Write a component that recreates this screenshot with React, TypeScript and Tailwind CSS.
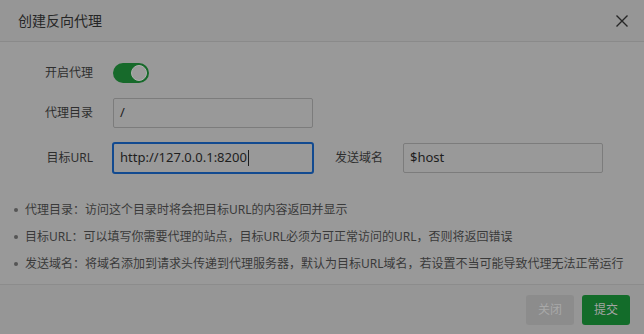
import React from "react";

export default function App() {
  const font = { fontFamily: '"Noto Sans", "Noto Sans CJK SC", sans-serif' };
  return (
    <div
      className="w-[644px] h-[334px] bg-[#999999] flex flex-col overflow-hidden"
      style={font}
    >
      {/* header */}
      <div className="h-[42px] shrink-0 flex items-center justify-between pl-[18px] pr-[14px] border-b border-[#8a8a8a] bg-[#969696]">
        <span className="text-[14px] text-[#262626] leading-none">创建反向代理</span>
        <svg width="14" height="14" viewBox="0 0 14 14" className="mr-[1px]">
          <path d="M1.5 1.5 L12.5 12.5 M12.5 1.5 L1.5 12.5" stroke="#262626" strokeWidth="1.4" />
        </svg>
      </div>

      {/* form */}
      <div className="flex flex-col pl-[23px] pt-[16px]">
        <div className="flex items-center h-[30px]">
          <div className="w-[90px] pr-[20px] text-right text-[12px] text-[#2e2e2e]">开启代理</div>
          <div className="w-[36px] h-[20px] rounded-full bg-[#176a2b] flex items-center justify-end pr-[2px] -mt-[1px]">
            <div className="w-[16px] h-[16px] rounded-full bg-[#9c9c9c] border border-[#b0b0b0]" />
          </div>
        </div>
        <div className="flex items-center h-[30px] mt-[10px]">
          <div className="w-[90px] pr-[20px] text-right text-[12px] text-[#2e2e2e]">代理目录</div>
          <div className="w-[200px] h-[30px] border border-[#7c7c7c] rounded-[2px] flex items-center pl-[6px] text-[13px] text-[#1e1e1e]">
            /
          </div>
        </div>
        <div className="flex items-center h-[30px] mt-[15px]">
          <div className="w-[90px] pr-[20px] text-right text-[12px] text-[#2e2e2e]">目标URL</div>
          <div className="w-[202px] h-[32px] -ml-[1px] border-2 border-[#124a90] rounded-[3px] flex items-center pl-[6px] text-[13px] text-[#1e1e1e]">
            http://127.0.0.1:8200
            <span className="inline-block w-[1px] h-[16px] bg-[#1e1e1e] ml-[1px]" />
          </div>
          <div className="w-[89px] pr-[20px] text-right text-[12px] text-[#2e2e2e]">发送域名</div>
          <div className="w-[200px] h-[30px] border border-[#7c7c7c] rounded-[2px] flex items-center pl-[6px] text-[13px] text-[#1e1e1e]">
            $host
          </div>
        </div>
      </div>

      {/* tips */}
      <ul className="flex flex-col gap-[14px] pl-[14px] mt-[30px] text-[12px] text-[#3a3a3a] leading-[13px]">
        <li className="flex items-center">
          <span className="w-[4px] h-[4px] rounded-full bg-[#555555] mr-[7px]" />
          代理目录：访问这个目录时将会把目标URL的内容返回并显示
        </li>
        <li className="flex items-center">
          <span className="w-[4px] h-[4px] rounded-full bg-[#555555] mr-[7px]" />
          目标URL：可以填写你需要代理的站点，目标URL必须为可正常访问的URL，否则将返回错误
        </li>
        <li className="flex items-center">
          <span className="w-[4px] h-[4px] rounded-full bg-[#555555] mr-[7px]" />
          发送域名：将域名添加到请求头传递到代理服务器，默认为目标URL域名，若设置不当可能导致代理无法正常运行
        </li>
      </ul>

      {/* footer */}
      <div className="mt-auto h-[50px] shrink-0 border-t border-[#8c8c8c] bg-[#969696] flex items-center justify-end gap-[8px] pr-[14px]">
        <div className="w-[48px] h-[30px] rounded-[3px] bg-[#8c8c8c] flex items-center justify-center text-[12px] text-[#a8a8a8]">
          关闭
        </div>
        <div className="w-[48px] h-[30px] rounded-[3px] bg-[#136c2a] flex items-center justify-center text-[12px] text-[#a4a4a4]">
          提交
        </div>
      </div>
    </div>
  );
}
